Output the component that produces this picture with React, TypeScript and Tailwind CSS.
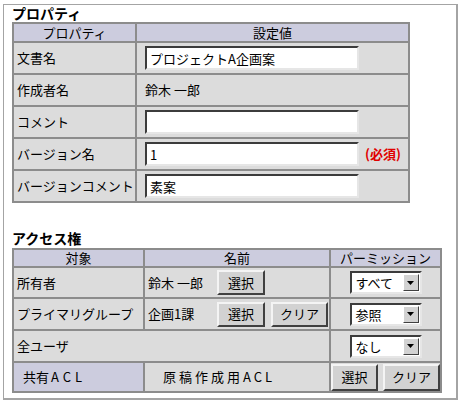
import React from 'react'

const cell = 'flex items-center bg-[#dcdcdc] text-[13px] text-black'
const head = 'flex items-center justify-center bg-[#ccccde] text-[13px] leading-[16px] text-black'
const inset =
  'border-2 border-t-[#3c3c3c] border-l-[#3c3c3c] border-r-[#e6e6e6] border-b-[#e6e6e6] bg-white'

function TextBox({ value }: { value: string }) {
  return (
    <input
      readOnly
      value={value}
      className={`h-[24px] w-[214px] px-[3px] text-[13px] text-black outline-none ${inset}`}
    />
  )
}

function Btn({ label, className }: { label: string; className: string }) {
  return (
    <button
      className={`flex items-center justify-center border-2 border-t-[#f4f4f4] border-l-[#f4f4f4] border-r-[#404040] border-b-[#404040] bg-[#d2d2d2] text-[13px] text-black ${className}`}
    >
      {label}
    </button>
  )
}

function Select({ value }: { value: string }) {
  return (
    <div className={`flex h-[23px] w-[72px] items-center ${inset}`}>
      <span className="flex-1 pl-[4px] text-[13px] leading-none">{value}</span>
      <span className="mr-[1px] flex h-[17px] w-[16px] items-center justify-center border border-t-white border-l-white border-r-[#404040] border-b-[#404040] bg-[#d2d2d2]">
        <svg width="7" height="4" viewBox="0 0 7 4">
          <path d="M0 0h7L3.5 4z" fill="#000" />
        </svg>
      </span>
    </div>
  )
}

export default function App() {
  const props = [
    { label: '文書名', input: 'プロジェクトA企画案' },
    { label: '作成者名', text: '鈴木 一郎' },
    { label: 'コメント', input: '' },
    { label: 'バージョン名', input: '1', required: true },
    { label: 'バージョンコメント', input: '素案' },
  ]

  return (
    <div className="font-['Noto_Sans_CJK_JP',sans-serif] pl-[3px] pt-[4px]">
      <div className="h-[396px] w-[455px] border-t border-l border-r-2 border-b-2 border-[#a4a4a4] bg-white pl-[8px]">
        {/* プロパティ */}
        <div className="h-[17px] text-[14px] font-bold leading-[17px] text-black">プロパティ</div>
        <div className="grid w-[398px] grid-cols-[121px_271px] grid-rows-[17px_30px_30px_30px_30px_30px] gap-[2px] bg-[#8c8c8c] p-[2px]">
          <div className={head}>プロパティ</div>
          <div className={head}>設定値</div>
          {props.map((p) => (
            <React.Fragment key={p.label}>
              <div className={`${cell} pl-[3px]`}>{p.label}</div>
              <div className={`${cell} pl-[8px]`}>
                {p.text !== undefined ? (
                  <span>{p.text}</span>
                ) : (
                  <TextBox value={p.input ?? ''} />
                )}
                {p.required && (
                  <span className="ml-[6px] font-bold text-[#e00000]">(必須)</span>
                )}
              </div>
            </React.Fragment>
          ))}
        </div>

        {/* アクセス権 */}
        <div className="mt-[25px] h-[20px] text-[14px] font-bold leading-[20px] text-black">アクセス権</div>
        <div className="grid w-[430px] grid-cols-[129px_184px_109px] grid-rows-[16px_29px_30px_30px_28px] gap-[2px] bg-[#8c8c8c] p-[2px]">
          <div className={head}>対象</div>
          <div className={head}>名前</div>
          <div className={head}>パーミッション</div>

          <div className={`${cell} pl-[3px]`}>所有者</div>
          <div className={`${cell} pl-[3px]`}>
            <span className="w-[69px]">鈴木 一郎</span>
            <Btn label="選択" className="h-[25px] w-[48px]" />
          </div>
          <div className={`${cell} justify-center`}>
            <Select value="すべて" />
          </div>

          <div className={`${cell} pl-[3px]`}>プライマリグループ</div>
          <div className={`${cell} pl-[3px]`}>
            <span className="w-[69px]">企画1課</span>
            <Btn label="選択" className="h-[25px] w-[48px]" />
            <Btn label="クリア" className="ml-[6px] h-[25px] w-[57px]" />
          </div>
          <div className={`${cell} justify-center`}>
            <Select value="参照" />
          </div>

          <div className={`${cell} col-span-2 pl-[3px]`}>全ユーザ</div>
          <div className={`${cell} justify-center`}>
            <Select value="なし" />
          </div>

          <div className="flex items-center bg-[#ccccde] pl-[9px] text-[13px] text-black">
            共有<span className="ml-[2px] tracking-[4px]">ACL</span>
          </div>
          <div className={`${cell} pl-[18px]`}>
            <span className="tracking-[3px]">原稿作成用</span>
            <span className="tracking-[3px]">ACL</span>
          </div>
          <div className={`${cell} gap-[5px]`}>
            <Btn label="選択" className="h-[27px] w-[47px]" />
            <Btn label="クリア" className="h-[27px] w-[57px]" />
          </div>
        </div>
      </div>
    </div>
  )
}
